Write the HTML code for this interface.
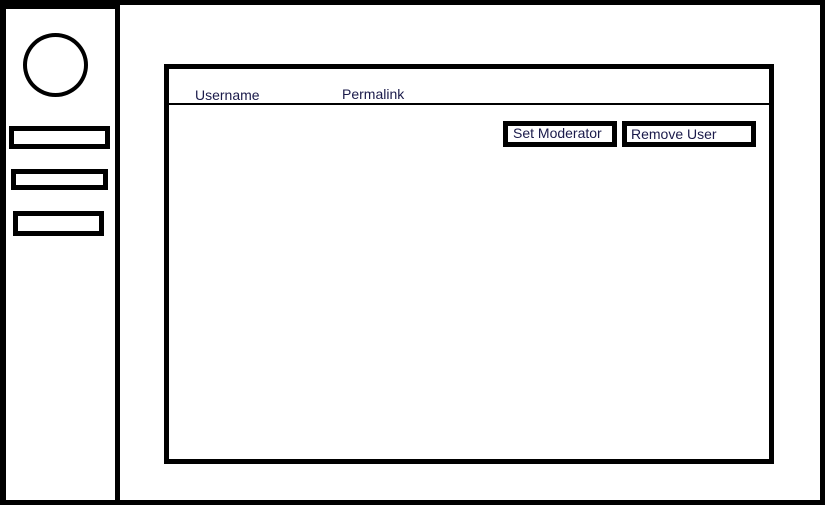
<!DOCTYPE html>
<html><head><style>
body{margin:0;width:825px;height:505px;background:#fff;position:relative;overflow:hidden;font-family:"Liberation Sans",sans-serif}
.a{position:absolute;box-sizing:border-box}
.t{position:absolute;font-size:14px;color:#1a1a4a;white-space:nowrap}
</style></head><body>
<div class="a" style="left:0;top:0;width:825px;height:505px;border:5px solid #000;border-left-width:6px"></div>
<div class="a" style="left:0;top:0;width:120px;height:9px;background:#000"></div>
<div class="a" style="left:115px;top:0;width:5px;height:505px;background:#000"></div>
<div class="a" style="left:23px;top:33px;width:65px;height:64px;border:4px solid #000;border-radius:50%"></div>
<div class="a" style="left:9px;top:126px;width:101px;height:23px;border:5px solid #000"></div>
<div class="a" style="left:11px;top:169px;width:97px;height:21px;border:5px solid #000"></div>
<div class="a" style="left:13px;top:211px;width:91px;height:25px;border:5px solid #000"></div>
<div class="a" style="left:164px;top:64px;width:610px;height:400px;border:5px solid #000"></div>
<div class="a" style="left:168px;top:103px;width:601px;height:2px;background:#000"></div>
<div class="t" style="left:195px;top:87px">Username</div>
<div class="t" style="left:342px;top:86px">Permalink</div>
<div class="a" style="left:503px;top:121px;width:114px;height:26px;border:5px solid #000"></div>
<div class="t" style="left:513px;top:125px">Set Moderator</div>
<div class="a" style="left:622px;top:121px;width:134px;height:26px;border:5px solid #000"></div>
<div class="t" style="left:631px;top:126px">Remove User</div>
</body></html>
